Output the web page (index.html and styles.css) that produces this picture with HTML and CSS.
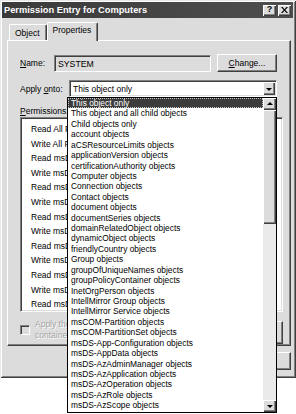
FILE: index.html
```html
<!DOCTYPE html>
<html>
<head>
<meta charset="utf-8">
<link rel="stylesheet" href="styles.css">
</head>
<body>
<div class="window">
  <div class="titlebar">
    <span class="title">Permission Entry for Computers</span>
    <div class="tbtns">
      <span class="tbtn">?</span>
      <span class="tbtn close">
        <svg width="7" height="6" viewBox="0 0 7 6"><path d="M0 0h1.6L3.5 2.2 5.4 0H7L4.3 3 7 6H5.4L3.5 3.8 1.6 6H0l2.7-3z" fill="#000"/></svg>
      </span>
    </div>
  </div>
  <div class="client">
    <div class="tabs">
      <div class="tab">Object</div>
      <div class="tab active">Properties</div>
    </div>
    <div class="panel">
      <div class="row name-row">
        <span class="label name-label"><u>N</u>ame:</span>
        <div class="field">SYSTEM</div>
        <div class="btn change"><span><u>C</u>hange...</span></div>
      </div>
      <div class="row apply-row">
        <span class="label apply-label">Apply <u>o</u>nto:</span>
        <div class="combo">
          <span class="combo-text">This object only</span>
          <span class="arrow-btn"><span class="tri down"></span></span>
        </div>
      </div>
      <div class="perm-label"><u>P</u>ermissions:</div>
      <div class="permlist">
        <div class="prow">Read All Properties</div>
        <div class="prow">Write All Properties</div>
        <div class="prow">Read msDS-Approx-Immed-Subordinates</div>
        <div class="prow">Write msDS-Approx-Immed-Subordinates</div>
        <div class="prow">Read msDS-Cached-Membership</div>
        <div class="prow">Write msDS-Cached-Membership</div>
        <div class="prow">Read msDS-Cached-Membership-Time-Stamp</div>
        <div class="prow">Write msDS-Cached-Membership-Time-Stamp</div>
        <div class="prow">Read msDS-Entry-Time-To-Die</div>
        <div class="prow">Write msDS-Entry-Time-To-Die</div>
        <div class="prow">Read msDS-ExecuteScriptPassword</div>
        <div class="prow">Write msDS-ExecuteScriptPassword</div>
        <div class="prow">Read msDS-HABSeniorityIndex</div>
      </div>
      <div class="bottom-row">
        <div class="check-wrap">
          <span class="checkbox"></span>
          <span class="disabled">Apply these permissions to objects and/or<br>containers within this container only</span>
        </div>
        <div class="btn clear"><span>Clear All</span></div>
      </div>
    </div>
    <div class="footer">
      <div class="btn"><span>OK</span></div>
      <div class="btn"><span>Cancel</span></div>
    </div>
  </div>
</div>

<div class="dropdown">
  <div class="items">
    <div class="item selected"><span>This object only</span></div>
    <div class="item">This object and all child objects</div>
    <div class="item">Child objects only</div>
    <div class="item">account objects</div>
    <div class="item">aCSResourceLimits objects</div>
    <div class="item">applicationVersion objects</div>
    <div class="item">certificationAuthority objects</div>
    <div class="item">Computer objects</div>
    <div class="item">Connection objects</div>
    <div class="item">Contact objects</div>
    <div class="item">document objects</div>
    <div class="item">documentSeries objects</div>
    <div class="item">domainRelatedObject objects</div>
    <div class="item">dynamicObject objects</div>
    <div class="item">friendlyCountry objects</div>
    <div class="item">Group objects</div>
    <div class="item">groupOfUniqueNames objects</div>
    <div class="item">groupPolicyContainer objects</div>
    <div class="item">InetOrgPerson objects</div>
    <div class="item">IntellMirror Group objects</div>
    <div class="item">IntellMirror Service objects</div>
    <div class="item">msCOM-Partition objects</div>
    <div class="item">msCOM-PartitionSet objects</div>
    <div class="item">msDS-App-Configuration objects</div>
    <div class="item">msDS-AppData objects</div>
    <div class="item">msDS-AzAdminManager objects</div>
    <div class="item">msDS-AzApplication objects</div>
    <div class="item">msDS-AzOperation objects</div>
    <div class="item">msDS-AzRole objects</div>
    <div class="item">msDS-AzScope objects</div>
  </div>
  <div class="scrollbar">
    <span class="sb-btn"><span class="tri up"></span></span>
    <span class="thumb"></span>
    <span class="track"></span>
    <span class="sb-btn"><span class="tri down"></span></span>
  </div>
</div>
</body>
</html>
```

FILE: styles.css
```css
* { box-sizing: border-box; }
html, body { margin: 0; padding: 0; background: #ffffff; }
body {
  width: 296px;
  height: 414px;
  position: relative;
  overflow: hidden;
  font-family: "Liberation Sans", Arial, sans-serif;
  font-size: 8.5px;
  color: #000;
}
u { text-decoration: underline; text-underline-offset: 1px; }

.window {
  width: 296px;
  height: 378px;
  background: #dcdcdc;
  padding: 2px 3px 2px 2px;
  box-shadow: inset 1px 1px 0 #e8e8e8, inset -1px -1px 0 #404040, inset 2px 2px 0 #ffffff, inset -2px -2px 0 #808080;
  display: flex;
  flex-direction: column;
}

.titlebar {
  height: 16px;
  background: linear-gradient(to right, #3a3a3a, #4e4e4e);
  display: flex;
  align-items: center;
  justify-content: space-between;
  padding: 0 2px 0 2px;
}
.title {
  color: #fff;
  font-weight: bold;
  font-size: 9.3px;
  letter-spacing: 0;
}
.tbtns { display: flex; gap: 2px; }
.tbtn {
  width: 13px;
  height: 11px;
  background: #dcdcdc;
  box-shadow: inset 1px 1px 0 #fff, inset -1px -1px 0 #404040, inset -2px -2px 0 #808080;
  display: flex;
  align-items: center;
  justify-content: center;
  font-weight: bold;
  font-size: 9px;
  line-height: 1;
  padding-bottom: 1px;
}

.client {
  flex: 1;
  display: flex;
  flex-direction: column;
  padding: 4px 3px 0 5px;
}

.tabs {
  display: flex;
  align-items: flex-end;
  height: 18px;
  padding-left: 2px;
  position: relative;
  z-index: 1;
}
.tab {
  height: 16px;
  padding: 3px 6px 0 5px;
  border: 1px solid #ffffff;
  border-bottom: none;
  border-right: 1px solid #404040;
  border-radius: 2px 2px 0 0;
  box-shadow: inset -1px 0 0 #808080;
}
.tab.active {
  height: 19px;
  margin-bottom: -1px;
  padding: 2px 6px 0 5px;
  background: #dcdcdc;
}

.panel {
  width: 284px;
  height: 306px;
  border: 1px solid;
  border-color: #ffffff #404040 #404040 #ffffff;
  box-shadow: inset -1px -1px 0 #808080;
  padding: 13px 0 0 12px;
  display: flex;
  flex-direction: column;
}

.row { display: flex; align-items: center; }
.name-row { height: 18px; }
.label { display: inline-block; }
.name-label { width: 34px; }
.field {
  width: 157px;
  height: 17px;
  border: 1px solid;
  border-color: #808080 #ffffff #ffffff #808080;
  box-shadow: inset 1px 1px 0 #404040, inset -1px -1px 0 #dcdcdc;
  padding: 3px 0 0 3px;
  font-size: 8.7px;
}
.btn {
  height: 18px;
  background: #dcdcdc;
  border: 1px solid;
  border-color: #ffffff #404040 #404040 #ffffff;
  box-shadow: inset -1px -1px 0 #808080;
  display: flex;
  align-items: center;
  justify-content: center;
}
.change { width: 60px; margin-left: 6px; }

.apply-row { margin-top: 8px; height: 17px; }
.apply-label { width: 49px; }
.combo {
  width: 208px;
  height: 17px;
  background: #fff;
  border: 1px solid;
  border-color: #808080 #ffffff #ffffff #808080;
  box-shadow: inset 1px 1px 0 #404040, inset -1px -1px 0 #dcdcdc;
  display: flex;
  align-items: center;
  justify-content: space-between;
  padding: 1px 1px 1px 3px;
}
.combo-text { padding-top: 1px; }
.arrow-btn, .sb-btn {
  width: 12px;
  height: 13px;
  background: #dcdcdc;
  box-shadow: inset 1px 1px 0 #fff, inset -1px -1px 0 #404040, inset -2px -2px 0 #808080;
  display: flex;
  align-items: center;
  justify-content: center;
}
.tri { width: 0; height: 0; border-left: 3px solid transparent; border-right: 3px solid transparent; }
.tri.down { border-top: 3px solid #000; margin-top: 1px; }
.tri.up { border-bottom: 3px solid #000; margin-bottom: 1px; }

.perm-label { margin-top: 9px; height: 11px; line-height: 11px; }
.permlist {
  width: 263px;
  height: 195px;
  background: #fff;
  border: 1px solid;
  border-color: #808080 #ffffff #ffffff #808080;
  box-shadow: inset 1px 1px 0 #404040, inset -1px -1px 0 #dcdcdc;
  padding: 4px 0 0 10px;
  overflow: hidden;
}
.prow { height: 14.6px; line-height: 14.6px; white-space: nowrap; }

.bottom-row {
  margin-top: 4px;
  display: flex;
  justify-content: space-between;
  width: 263px;
}
.check-wrap { display: flex; align-items: center; gap: 5px; }
.checkbox {
  width: 10px;
  height: 10px;
  background: #dcdcdc;
  border: 1px solid;
  border-color: #808080 #ffffff #ffffff #808080;
  box-shadow: inset 1px 1px 0 #404040;
}
.disabled {
  color: #a4a4a4;
  text-shadow: 1px 1px 0 #ffffff;
  line-height: 11.5px;
}
.clear { width: 66px; height: 23px; margin-top: 5px; }

.footer {
  display: flex;
  justify-content: flex-end;
  gap: 6px;
  padding: 6px 0 0 0;
  margin-right: -1px;
}
.footer .btn { width: 62px; }

.dropdown {
  position: absolute;
  left: 67px;
  top: 97px;
  width: 210px;
  height: 316px;
  background: #fff;
  border: 1px solid #000;
  display: flex;
}
.items { flex: 1; overflow: hidden; padding-top: 0; }
.item {
  height: 10.43px;
  line-height: 10.43px;
  padding-left: 3px;
  white-space: nowrap;
  font-size: 8.4px;
}
.item.selected {
  background: #3c3c3c;
  color: #fff;
  outline: 1px dotted #c8c8c8;
  outline-offset: -1px;
}
.scrollbar {
  width: 13px;
  display: flex;
  flex-direction: column;
  background: #eaeaea;
}
.scrollbar .sb-btn { width: 13px; height: 12px; flex: none; }
.thumb {
  height: 114px;
  flex: none;
  background: #dcdcdc;
  box-shadow: inset 1px 1px 0 #fff, inset -1px -1px 0 #404040, inset -2px -2px 0 #808080;
}
.track { flex: 1; }
```
